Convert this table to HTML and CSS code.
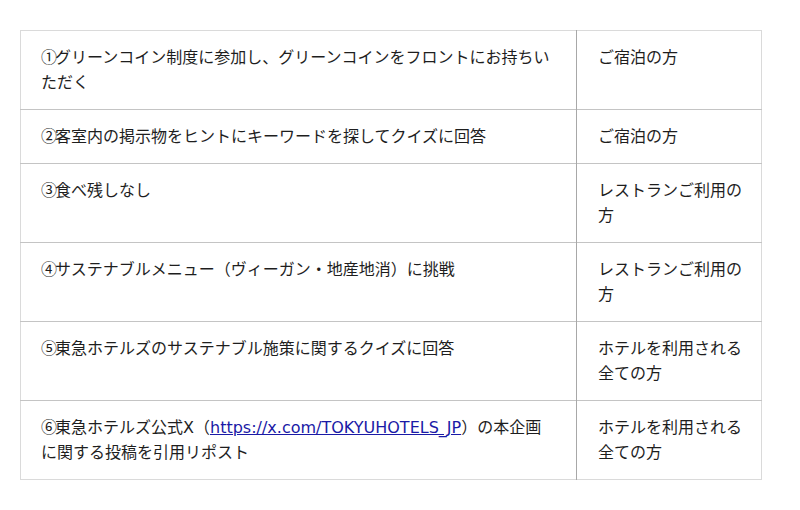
FILE: index.html
```html
<!DOCTYPE html>
<html lang="ja">
<head>
<meta charset="utf-8">
<link rel="stylesheet" href="styles.css">
</head>
<body>
<div class="page">
<table class="tbl">
<tr><td class="task"><span class="num">①</span>グリーンコイン制度に参加し、グリーンコインをフロントにお持ちいただく</td><td class="who">ご宿泊の方</td></tr>
<tr><td class="task"><span class="num">②</span>客室内の掲示物をヒントにキーワードを探してクイズに回答</td><td class="who">ご宿泊の方</td></tr>
<tr><td class="task"><span class="num">③</span>食べ残しなし</td><td class="who">レストランご利用の方</td></tr>
<tr><td class="task"><span class="num">④</span>サステナブルメニュー（ヴィーガン・地産地消）に挑戦</td><td class="who">レストランご利用の方</td></tr>
<tr><td class="task"><span class="num">⑤</span>東急ホテルズのサステナブル施策に関するクイズに回答</td><td class="who">ホテルを利用される全ての方</td></tr>
<tr><td class="task"><span class="num">⑥</span>東急ホテルズ公式X（<a class="link" href="#">https://x.com/TOKYUHOTELS_JP</a>）の本企画に関する投稿を引用リポスト</td><td class="who">ホテルを利用される全ての方</td></tr>
</table>
</div>
</body>
</html>
```
FILE: styles.css
```css
html, body {
  margin: 0;
  padding: 0;
  background: #fff;
}
.page {
  padding: 30px 20px;
  font-family: "DejaVu Sans", "Noto Sans CJK JP", sans-serif;
  font-size: 16px;
  line-height: 25px;
  color: #1e1e1e;
}
.tbl {
  width: 742px;
  border-collapse: collapse;
  border: 1px solid #dadada;
}
.tbl td {
  vertical-align: top;
  padding: 14px 20px 14px 20px;
  border-top: 1px solid #c4c4c4;
}
.tbl tr:first-child td {
  border-top: 1px solid #dadada;
}
.task {
  width: 515px;
  border-right: 1px solid #a8a8a8;
}
.tbl .who {
  padding-left: 21px;
  padding-right: 12px;
}
.num {
  font-family: "Noto Sans CJK JP", sans-serif;
  line-height: 16px;
  letter-spacing: -2px;
}
.link {
  color: #1a1aa6;
  text-decoration: underline;
}
```
